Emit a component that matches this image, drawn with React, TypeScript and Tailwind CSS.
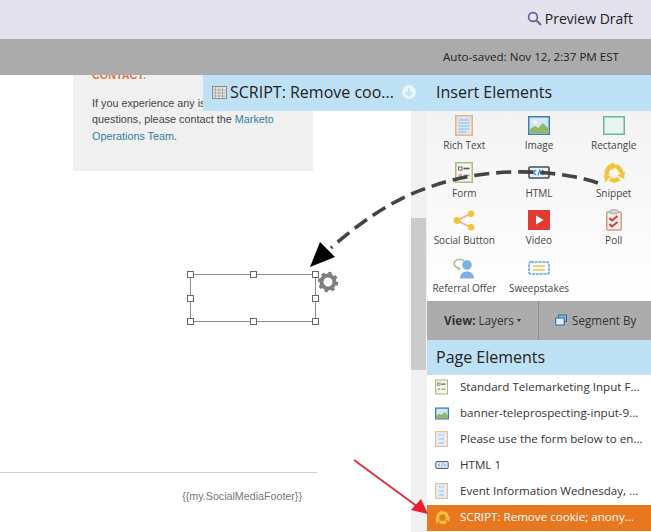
import type { ReactNode } from "react";

function RichTextIcon() {
  return (
    <svg width="18" height="21" viewBox="0 0 18 21">
      <rect x="0.75" y="0.75" width="16.5" height="19.5" fill="#dbe9f7" stroke="#efb27c" strokeWidth="1.5" />
      <path d="M3.5 5h11M3.5 8h11M3.5 11h11M3.5 14h11M3.5 17h8" stroke="#8db7e0" strokeWidth="1.2" />
    </svg>
  );
}

function ImageIcon() {
  return (
    <svg width="22" height="19" viewBox="0 0 22 19">
      <rect x="0.75" y="0.75" width="20.5" height="17.5" fill="#cfe9f7" stroke="#3f7fa8" strokeWidth="1.5" />
      <circle cx="7" cy="6" r="2.2" fill="#f5f5e0" />
      <path d="M2 17v-4l5-3 3 2 5-5 5 5v5z" fill="#92b864" />
    </svg>
  );
}

function RectangleIcon() {
  return (
    <svg width="22" height="19" viewBox="0 0 22 19">
      <rect x="0.75" y="0.75" width="20.5" height="17.5" fill="#e5f6ee" stroke="#6eb59c" strokeWidth="1.5" />
    </svg>
  );
}

function FormIcon({ small }: { small?: boolean }) {
  const s = small ? 13 : 18;
  return (
    <svg width={s} height={small ? 16 : 21} viewBox="0 0 18 21">
      <rect x="0.75" y="0.75" width="16.5" height="19.5" fill="#f6f6ee" stroke="#a4c07a" strokeWidth="1.5" />
      <rect x="3.5" y="5" width="3.5" height="3" fill="#fff" stroke="#666" />
      <path d="M8.5 6.5h6" stroke="#555" strokeWidth="1.6" />
      <rect x="3.5" y="12" width="3.5" height="3" fill="#d9a3b5" />
      <path d="M8.5 13.5h6" stroke="#999" strokeWidth="1.6" />
    </svg>
  );
}

function HtmlIcon({ small }: { small?: boolean }) {
  return (
    <svg width={small ? 14 : 22} height={small ? 8 : 13} viewBox="0 0 22 13">
      <rect x="1" y="1" width="20" height="11" rx="1" fill="#e8f1fa" stroke="#444c58" strokeWidth="1.6" />
      <path d="M8 4L5 6.5 8 9M14 4l3 2.5L14 9" fill="none" stroke="#3f8fd8" strokeWidth="1.5" />
      <path d="M12 3.5L10 9.5" stroke="#3f8fd8" strokeWidth="1.3" />
    </svg>
  );
}

function SnippetIcon({ size = 22 }: { size?: number }) {
  return (
    <svg width={size} height={size} viewBox="0 0 22 22">
      <g fill="none" stroke="#f5c33b" strokeWidth="4.6">
        <path d="M4.200 13.500A7.200 7.200 0 0 1 9.500 4" />
        <path d="M13 4.200A7.200 7.200 0 0 1 18 11.500" />
        <path d="M16 16.500A7.200 7.200 0 0 1 7 17" />
      </g>
      <path d="M8.500 0l6 4-6 4.500zM22 9.500l-1 7.500-7-3.500zM2.500 20.500L0.500 13l7.500 1z" fill="#f5c33b" />
    </svg>
  );
}

function SocialIcon() {
  return (
    <svg width="22" height="21" viewBox="0 0 22 21">
      <path d="M4 10.500L18 3.500M4 10.500L18 17.500" stroke="#f0b083" strokeWidth="1.5" />
      <circle cx="4" cy="10.500" r="3.400" fill="#f5c33b" />
      <circle cx="18" cy="3.700" r="3.200" fill="#f5c33b" />
      <circle cx="18" cy="17.300" r="3.200" fill="#f5c33b" />
    </svg>
  );
}

function VideoIcon() {
  return (
    <svg width="22" height="20" viewBox="0 0 22 20">
      <rect width="22" height="20" fill="#e23b33" />
      <path d="M8 5.500l7.500 4.500L8 14.500z" fill="#fff" />
    </svg>
  );
}

function PollIcon() {
  return (
    <svg width="16" height="22" viewBox="0 0 16 22">
      <rect x="0.750" y="3" width="14.500" height="18" rx="1.200" fill="#f6efe8" stroke="#c99e85" strokeWidth="1.500" />
      <rect x="4" y="0.800" width="8" height="4" rx="2" fill="#d5d5d5" stroke="#aaa" />
      <path d="M3.500 9l2.500 2.500L11.500 7M3.500 15l2.500 2.500L11.500 13" fill="none" stroke="#d8343a" strokeWidth="2" />
    </svg>
  );
}

function ReferralIcon() {
  return (
    <svg width="22" height="21" viewBox="0 0 22 21">
      <path d="M7 10.500C2 10 0 6.500 2 3.500 4 .5 9 0.500 11 3" fill="none" stroke="#a4c07a" strokeWidth="1.500" />
      <path d="M4.500 9l3 1.500-2 2.500z" fill="#a4c07a" />
      <circle cx="14" cy="7" r="4.800" fill="#7db0e3" />
      <path d="M7 20.500c0-4.500 3-7 7-7s7 2.500 7 7z" fill="#7db0e3" />
    </svg>
  );
}

function SweepstakesIcon() {
  return (
    <svg width="22" height="14" viewBox="0 0 22 14">
      <rect x="1" y="1" width="20" height="12" rx="2" fill="#f7fbfe" stroke="#5aa7dc" strokeWidth="1.500" strokeDasharray="3 0.800" />
      <path d="M5 5h12M5 9h12" stroke="#f0d56d" strokeWidth="1.800" />
    </svg>
  );
}

function PageIcon() {
  return (
    <svg width="13" height="16" viewBox="0 0 13 16">
      <rect x="0.600" y="0.600" width="11.800" height="14.800" fill="#e3eefa" stroke="#efc096" strokeWidth="1.200" />
      <rect x="4" y="3" width="2" height="2" fill="#bcd4ee" />
      <rect x="7" y="3" width="2" height="2" fill="#bcd4ee" />
      <rect x="4" y="7" width="5" height="2" fill="#bcd4ee" />
      <rect x="4" y="11" width="5" height="2" fill="#bcd4ee" />
    </svg>
  );
}

const insertItems: { label: string; icon: ReactNode }[] = [
  { label: "Rich Text", icon: <RichTextIcon /> },
  { label: "Image", icon: <ImageIcon /> },
  { label: "Rectangle", icon: <RectangleIcon /> },
  { label: "Form", icon: <FormIcon /> },
  { label: "HTML", icon: <HtmlIcon /> },
  { label: "Snippet", icon: <SnippetIcon /> },
  { label: "Social Button", icon: <SocialIcon /> },
  { label: "Video", icon: <VideoIcon /> },
  { label: "Poll", icon: <PollIcon /> },
  { label: "Referral Offer", icon: <ReferralIcon /> },
  { label: "Sweepstakes", icon: <SweepstakesIcon /> },
];

const layers: { label: string; icon: ReactNode; active?: boolean }[] = [
  { label: "Standard Telemarketing Input F...", icon: <FormIcon small /> },
  {
    label: "banner-teleprospecting-input-9...",
    icon: (
      <svg width="14" height="13" viewBox="0 0 22 19">
        <rect x="1" y="1" width="20" height="17" fill="#cfe9f7" stroke="#3f7fa8" strokeWidth="2" />
        <path d="M2 17v-4l5-3 3 2 5-5 5 5v5z" fill="#92b864" />
      </svg>
    ),
  },
  { label: "Please use the form below to en...", icon: <PageIcon /> },
  { label: "HTML 1", icon: <HtmlIcon small /> },
  { label: "Event Information Wednesday, ...", icon: <PageIcon /> },
  { label: "SCRIPT: Remove cookie; anony...", icon: <SnippetIcon size={15} />, active: true },
];

function Handle({ className }: { className: string }) {
  return <div className={`absolute w-[7px] h-[7px] bg-white border border-[#666] ${className}`} />;
}

export default function App() {
  return (
    <div className="relative w-[651px] h-[532px] overflow-hidden flex flex-col bg-white text-[#222] font-['Open_Sans',sans-serif]">
      <header className="h-[39px] bg-[#e3e1ec] flex items-center justify-end pr-[18px] pb-[2px] gap-[3px] text-[14px]">
        <svg width="15" height="15" viewBox="0 0 15 15">
          <circle cx="6" cy="6" r="4.400" fill="#e8e6f3" stroke="#5f5a9c" strokeWidth="1.600" />
          <path d="M9.500 9.500L14 14" stroke="#6f6a9f" strokeWidth="2.200" />
        </svg>
        <span>Preview Draft</span>
      </header>
      <div className="h-[36px] bg-[#ababab] flex items-center justify-end pr-[32px] text-[11.6px]">
        Auto-saved: Nov 12, 2:37 PM EST
      </div>

      <div className="flex flex-1 min-h-0">
        <main className="w-[411px] flex flex-col font-['Liberation_Sans',sans-serif]">
          <div className="ml-[73px] w-[240px] h-[96px] bg-[#f0f0f0] overflow-hidden pl-[19px] text-[10.8px] leading-[16.500px] text-[#444]">
            <div className="-mt-[8px] mb-[11px] font-bold text-[#e8703a]">CONTACT:</div>
            <p>
              If you experience any issues or have
              <br />
              questions, please contact the <span className="text-[#2f7f9f]">Marketo</span>
              <br />
              <span className="text-[#2f7f9f]">Operations Team</span>.
            </p>
          </div>
          <footer className="mt-auto mb-[1px] w-[317px] h-[59px] border-t border-[#cfcfcf] pt-[15px] pr-[15px] text-right text-[10.700px] text-[#777]">
            {"{{my.SocialMediaFooter}}"}
          </footer>
        </main>

        <div className="w-[16px] bg-[#f0f0f0]">
          <div className="mt-[143px] h-[152px] w-[15px] bg-[#cbcbcb]" />
        </div>

        <aside className="w-[224px] flex flex-col">
          <h2 className="h-[36px] shrink-0 bg-[#bfe1f6] pl-[9px] pb-[2px] flex items-center text-[16px]">Insert Elements</h2>
          <div className="h-[190px] shrink-0 grid grid-cols-3 auto-rows-[47.7px] pt-[3px] bg-gradient-to-b from-[#f3f3f3] to-white text-[#444] text-[10px]">
            {insertItems.map((item) => (
              <div key={item.label} className="flex flex-col items-center">
                <div className="h-[22px] flex items-center justify-center">{item.icon}</div>
                <div className="mt-[1px] leading-[16px] whitespace-nowrap">{item.label}</div>
              </div>
            ))}
          </div>
          <div className="h-[39px] shrink-0 bg-[#acacac] flex items-center text-[11.7px] text-[#333]">
            <div className="w-[112px] h-full flex items-center justify-center border-r border-[#8f8f8f]">
              <b className="font-bold mr-[3px]">View:</b> Layers
              <span className="ml-[3px] mb-[1px] border-x-[2.500px] border-t-[3px] border-x-transparent border-t-[#333]" />
            </div>
            <div className="flex-1 flex items-center pl-[16px] gap-[5px]">
              <svg width="12" height="12" viewBox="0 0 12 12">
                <rect x="3.500" y="1" width="8" height="6.500" fill="#8ab8df" stroke="#33668f" />
                <rect x="0.700" y="4" width="8.500" height="7" fill="#dcecf8" stroke="#33668f" />
              </svg>
              Segment By
            </div>
          </div>
          <h2 className="h-[35px] shrink-0 bg-[#bfe1f6] pl-[9px] pb-[2px] flex items-center text-[16px]">Page Elements</h2>
          <ul className="text-[11.6px] text-[#333]">
            {layers.map((row) => (
              <li
                key={row.label}
                className={`h-[26px] flex items-center pb-[2px] whitespace-nowrap ${
                  row.active ? "bg-[#e8781f] text-white" : ""
                }`}
              >
                <span className="w-[33px] pl-[8px] shrink-0 flex items-center">{row.icon}</span>
                {row.label}
              </li>
            ))}
          </ul>
        </aside>
      </div>

      {/* tab dragged over the canvas */}
      <div className="absolute left-[203px] top-[75px] w-[224px] h-[36px] bg-[#bfe1f6] flex items-center pl-[9px] pb-[2px] text-[16px]">
        <svg width="15" height="13" viewBox="0 0 15 13" className="mr-[3px] shrink-0">
          <rect x="0.500" y="0.500" width="14" height="12" fill="#e8e8e8" stroke="#888" />
          <path d="M0 4h15M0 7h15M0 10h15M3.500 0v13M7 0v13M10.500 0v13" stroke="#a0a0a0" strokeWidth="0.800" />
        </svg>
        <span className="whitespace-nowrap">SCRIPT: Remove coo...</span>
        <svg width="14" height="14" viewBox="0 0 14 14" className="ml-[8px] shrink-0">
          <circle cx="7" cy="7" r="7" fill="#e9f4fb" />
          <path d="M7 3v7M4 7.500l3 3 3-3" fill="none" stroke="#bfe1f6" strokeWidth="1.800" />
        </svg>
      </div>

      {/* selected element on the canvas */}
      <div className="absolute left-[190px] top-[274px] w-[126px] h-[48px] border border-[#8a8a8a]">
        <Handle className="-left-[4px] -top-[4px]" />
        <Handle className="left-[59px] -top-[4px]" />
        <Handle className="-right-[4px] -top-[4px]" />
        <Handle className="-left-[4px] top-[20px]" />
        <Handle className="-right-[4px] top-[20px]" />
        <Handle className="-left-[4px] -bottom-[4px]" />
        <Handle className="left-[59px] -bottom-[4px]" />
        <Handle className="-right-[4px] -bottom-[4px]" />
      </div>
      <svg width="22" height="22" viewBox="0 0 22 22" className="absolute left-[317px] top-[271px]">
        <circle cx="11" cy="11" r="6.500" fill="none" stroke="#7f7f7f" strokeWidth="4" />
        <circle cx="11" cy="11" r="8.500" fill="none" stroke="#7f7f7f" strokeWidth="3.500" strokeDasharray="3.300 3.370" />
      </svg>

      {/* annotations */}
      <svg width="651" height="532" viewBox="0 0 651 532" className="absolute left-0 top-0 pointer-events-none">
        <path
          d="M598 183C560 170 490 165 430 187C395 198 360 222 331 248"
          fill="none"
          stroke="#444"
          strokeWidth="3.600"
          strokeDasharray="15 7"
        />
        <path d="M310 267L320 242L335 257Z" fill="#000" />
        <path d="M354 460L418 507" stroke="#e0303c" strokeWidth="2" />
        <path d="M428 514L411 510L421 499Z" fill="#ea1f2e" />
      </svg>
    </div>
  );
}
